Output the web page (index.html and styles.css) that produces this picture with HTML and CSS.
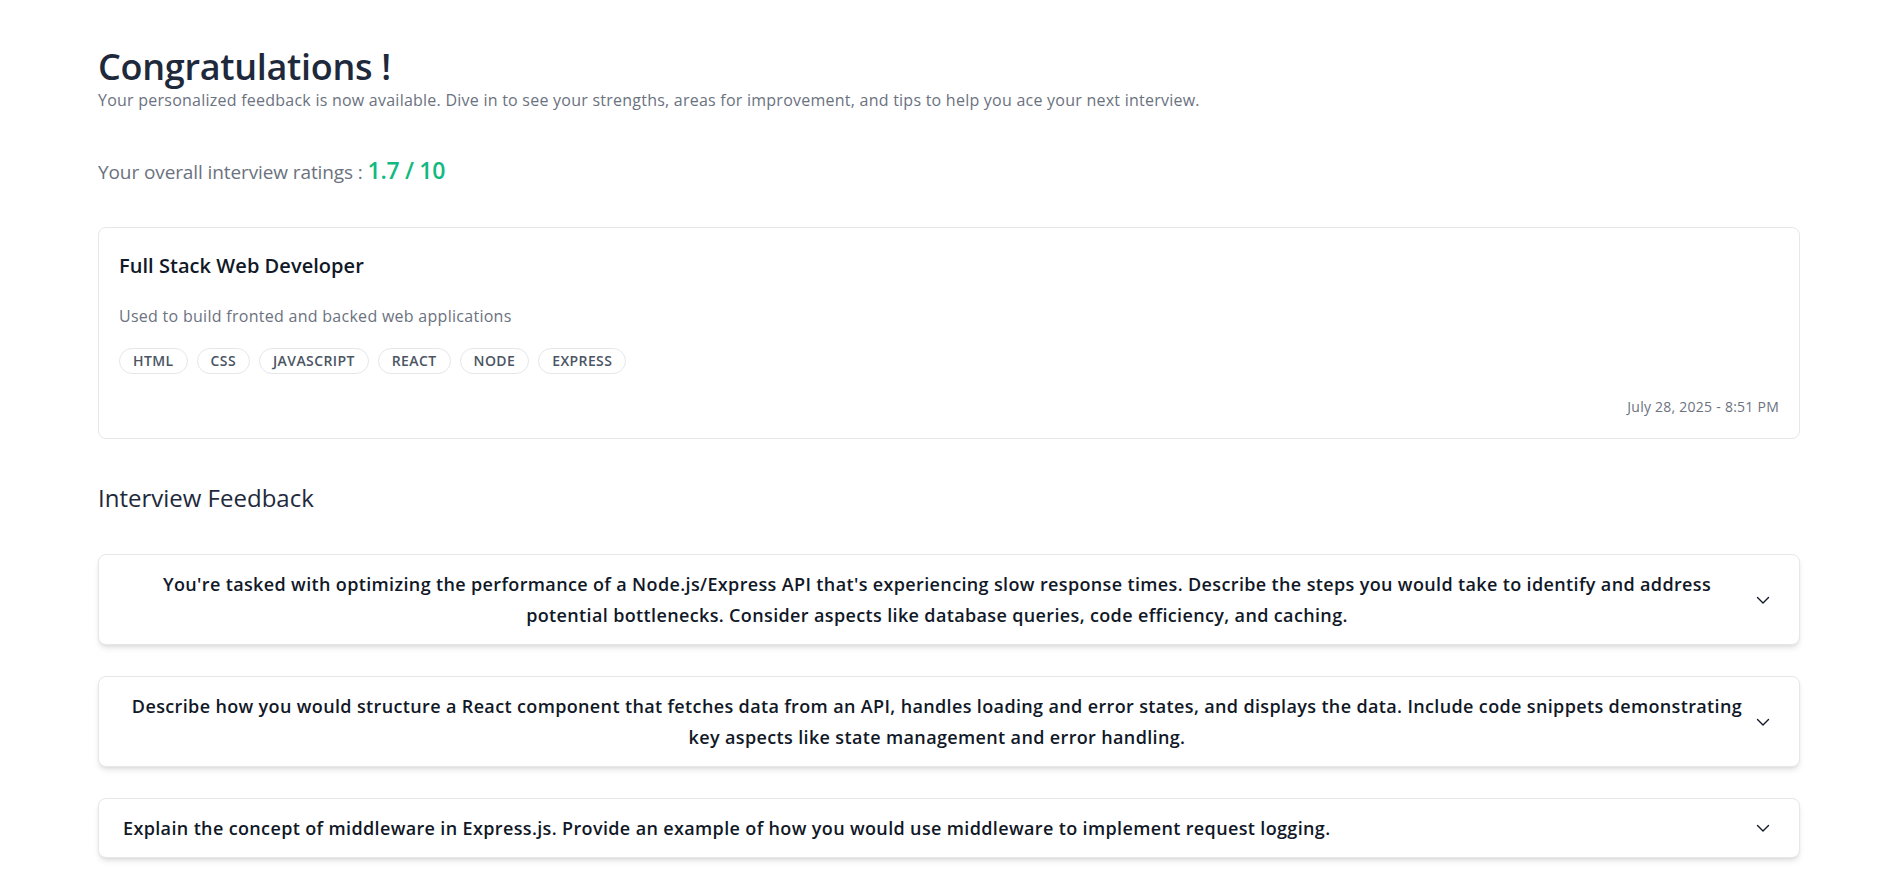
FILE: index.html
```html
<!DOCTYPE html>
<html lang="en">
<head>
<meta charset="utf-8">
<title>Interview Feedback</title>
<link rel="stylesheet" href="styles.css">
</head>
<body>
<main class="page">
  <header class="intro">
    <h1 class="title">Congratulations !</h1>
    <p class="subtitle">Your personalized feedback is now available. Dive in to see your strengths, areas for improvement, and tips to help you ace your next interview.</p>
  </header>

  <p class="rating">Your overall interview ratings : <span class="rating-value">1.7 / 10</span></p>

  <section class="card">
    <h2 class="card-title">Full Stack Web Developer</h2>
    <p class="card-desc">Used to build fronted and backed web applications</p>
    <ul class="tags">
      <li class="tag">HTML</li>
      <li class="tag">CSS</li>
      <li class="tag">JAVASCRIPT</li>
      <li class="tag">REACT</li>
      <li class="tag">NODE</li>
      <li class="tag">EXPRESS</li>
    </ul>
    <p class="card-date">July 28, 2025 - 8:51 PM</p>
  </section>

  <h2 class="section-title">Interview Feedback</h2>

  <div class="accordion">
    <div class="acc-item">
      <button class="acc-head" type="button">
        <span class="acc-text">You're tasked with optimizing the performance of a Node.js/Express API that's experiencing slow response times. Describe the steps you would take to identify and address potential bottlenecks. Consider aspects like database queries, code efficiency, and caching.</span>
        <svg class="chev" width="24" height="24" viewBox="0 0 24 24" fill="none" stroke="currentColor" stroke-width="1.4" stroke-linecap="round" stroke-linejoin="round"><path d="m6.5 9.5 5.5 5.5 5.5-5.5"/></svg>
      </button>
    </div>
    <div class="acc-item">
      <button class="acc-head" type="button">
        <span class="acc-text">Describe how you would structure a React component that fetches data from an API, handles loading and error states, and displays the data. Include code snippets demonstrating key aspects like state management and error handling.</span>
        <svg class="chev" width="24" height="24" viewBox="0 0 24 24" fill="none" stroke="currentColor" stroke-width="1.4" stroke-linecap="round" stroke-linejoin="round"><path d="m6.5 9.5 5.5 5.5 5.5-5.5"/></svg>
      </button>
    </div>
    <div class="acc-item">
      <button class="acc-head" type="button">
        <span class="acc-text">Explain the concept of middleware in Express.js. Provide an example of how you would use middleware to implement request logging.</span>
        <svg class="chev" width="24" height="24" viewBox="0 0 24 24" fill="none" stroke="currentColor" stroke-width="1.4" stroke-linecap="round" stroke-linejoin="round"><path d="m6.5 9.5 5.5 5.5 5.5-5.5"/></svg>
      </button>
    </div>
  </div>
</main>
</body>
</html>
```

FILE: styles.css
```css
* { box-sizing: border-box; }

html, body {
  margin: 0;
  padding: 0;
  background: #ffffff;
}

body {
  font-family: "Open Sans", "Noto Sans", "Liberation Sans", sans-serif;
  color: #111827;
}

.page {
  padding: 47px 98px 40px 98px;
}

.title {
  margin: 0;
  font-size: 36px;
  line-height: 40px;
  font-weight: 600;
  letter-spacing: -0.3px;
  color: #1e293b;
}

.subtitle {
  margin: 1px 0 0 0;
  font-size: 16px;
  line-height: 24px;
  letter-spacing: 0.24px;
  color: #6b7280;
}

.rating {
  margin: 42px 0 0 0;
  font-size: 19px;
  line-height: 32px;
  letter-spacing: -0.1px;
  color: #6b7280;
}

.rating-value {
  font-size: 23px;
  font-weight: 600;
  letter-spacing: -0.3px;
  color: #10b981;
}

.card {
  margin-top: 39px;
  border: 1px solid #e5e7eb;
  border-radius: 8px;
  padding: 24px 20px 21px 20px;
  background: #fff;
}

.card-title {
  margin: 0;
  font-size: 20px;
  line-height: 28px;
  font-weight: 600;
  letter-spacing: 0.05px;
  color: #111827;
}

.card-desc {
  margin: 24px 0 0 0;
  font-size: 16px;
  line-height: 24px;
  letter-spacing: 0.28px;
  color: #6b7280;
}

.tags {
  list-style: none;
  margin: 20px 0 0 0;
  padding: 0;
  display: flex;
  flex-wrap: wrap;
  gap: 9px;
}

.tag {
  border: 1px solid #e5e7eb;
  border-radius: 9999px;
  padding: 2px 13px;
  font-size: 14px;
  line-height: 20px;
  font-weight: 600;
  letter-spacing: 0.4px;
  color: #4b5563;
}

.card-date {
  margin: 23px 0 0 0;
  text-align: right;
  font-size: 14px;
  line-height: 20px;
  letter-spacing: 0.25px;
  color: #6b7280;
}

.section-title {
  margin: 43px 0 0 0;
  font-size: 24px;
  line-height: 32px;
  font-weight: 500;
  color: #1e293b;
}

.accordion {
  margin-top: 40px;
  display: flex;
  flex-direction: column;
  gap: 31px;
}

.acc-item {
  border: 1px solid #e5e7eb;
  border-radius: 8px;
  background: #fff;
  box-shadow: 0 4px 6px -1px rgba(0, 0, 0, 0.1), 0 2px 4px -2px rgba(0, 0, 0, 0.1);
}

.acc-head {
  width: 100%;
  display: flex;
  align-items: center;
  justify-content: space-between;
  padding: 13.5px 24px;
  border: 0;
  background: transparent;
  font-family: inherit;
  font-size: 18px;
  line-height: 31px;
  font-weight: 600;
  letter-spacing: 0.36px;
  color: #111827;
  cursor: pointer;
  text-align: center;
}

.acc-text {
  text-align: center;
}

.chev {
  flex-shrink: 0;
  color: #111827;
}
```
